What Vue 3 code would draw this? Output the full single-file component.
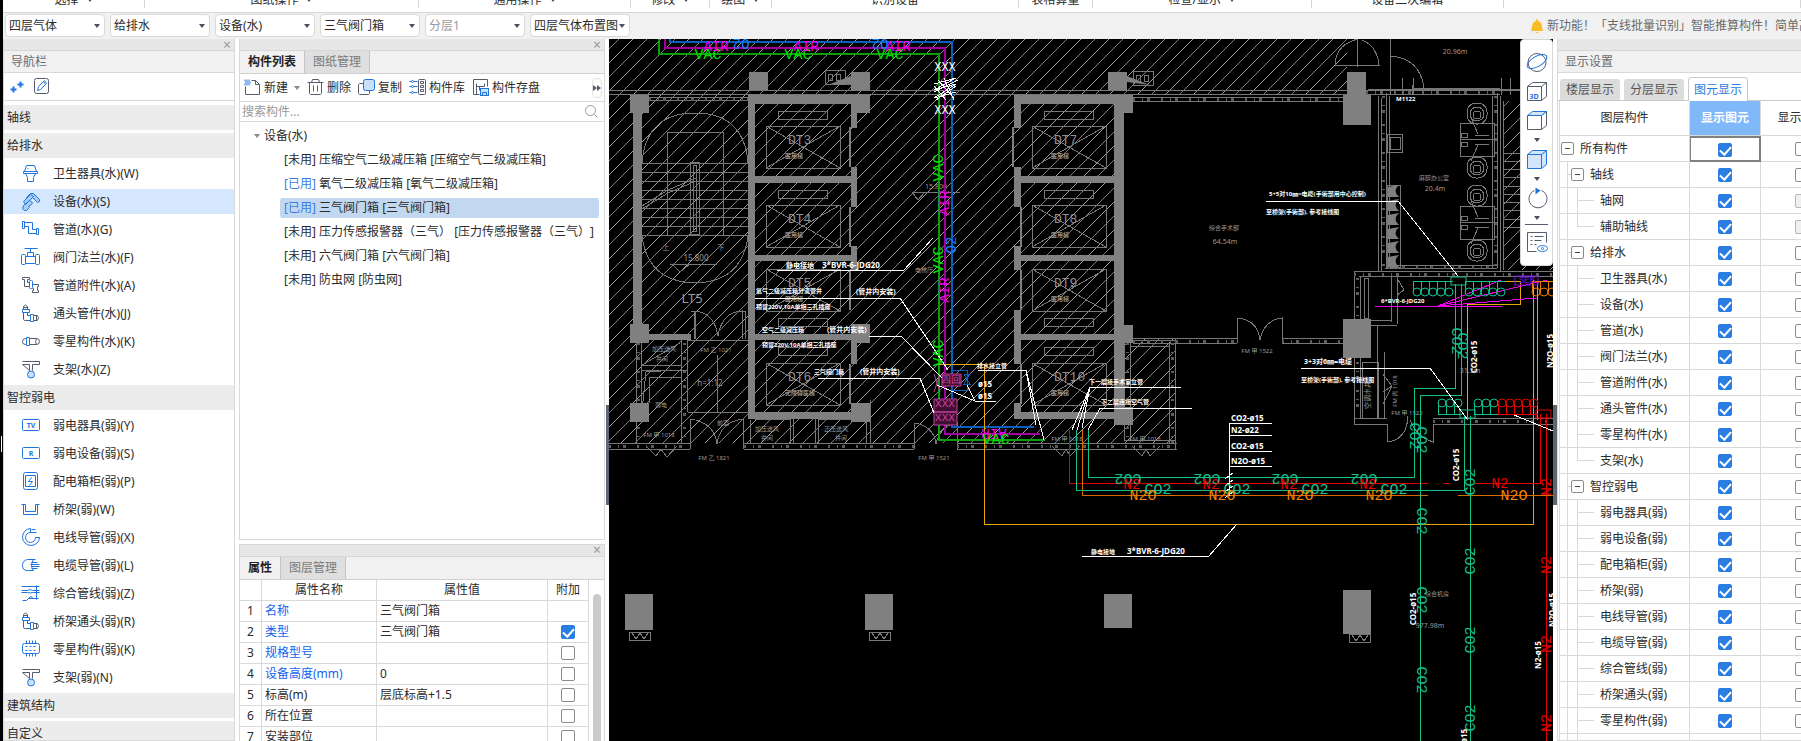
<script setup>
import { ref } from 'vue';

const ribbonGroups = [
    { name: '选择', w: 142, arrow: true },
    { name: '图纸操作', w: 274, arrow: true },
    { name: '通用操作', w: 213, arrow: true },
    { name: '修改', w: 78, arrow: true },
    { name: '绘图', w: 61, arrow: true },
    { name: '识别设备', w: 248 },
    { name: '表格算量', w: 73 },
    { name: '检查/显示', w: 219, arrow: true },
    { name: '设备二次编辑', w: 192 },
    { name: '', w: 298 }
];

const filters = [
    { label: '楼层', value: '四层气体' },
    { label: '专业', value: '给排水' },
    { label: '构件类型', value: '设备(水)' },
    { label: '构件', value: '三气阀门箱' },
    { label: '分层', value: '分层1', disabled: true },
    { label: '图纸', value: '四层气体布置图' }
];

const B = '#1f74e0';
const G = '#555c6e';
const icons = {
    toilet: `<g stroke="${B}"><path d="M5 1h8l2 6H3zM2 7h14v2H2zM4 9l2 4v4h6v-4l2-4"/><path d="M6 4h1"/></g>`,
    gun: `<g stroke="${B}" fill="#a9cdf7"><path d="M5 5l4-4h3l6 6v2l-2 1-5-5-3 3z"/><path d="M2 9l7-7 3 2-8 8zM2 13l6-5 3 2-1 2-3 2 1 1-3 3H3l-2-2z"/></g>`,
    pipe: `<g stroke="${B}"><path d="M1 1h2v7H1zM15 8h2v6h-2zM3 2h8v7h4M3 6h4v7h8"/></g>`,
    valve: `<g stroke="${B}"><path d="M3 0h13M9 0v4M6 4h6v4H6zM4 8h10v7H4z"/><rect x="0" y="6" width="4" height="10" rx="1" fill="#fff"/><rect x="14" y="6" width="4" height="10" rx="1" fill="#fff"/></g>`,
    fitting: `<g stroke="${G}"><path d="M1 1h7v2H6v3h2M1 1v2h2v7h5M11 8h6v2h-1v4h1v2h-6M11 12h1v2h-1v2"/><rect x="8" y="4" width="3" height="8" rx="1" stroke="${B}"/></g>`,
    elbow: `<g stroke="${G}"><path d="M2 5V2q2-3 4 0v3M2 8v7q0 1 2 1h5M6 8v3h3M12 11h4q2 2 0 5h-4M15 11v5M2 3h4"/><path stroke="${B}" d="M1 5h7v3H1zM9 10h3v7H9z"/></g>`,
    sleeve: `<g stroke="${G}"><rect x="1" y="6" width="17" height="6" rx="3"/><path d="M15 6q-2 3 0 6"/><path stroke="${B}" fill="#fff" d="M5 5h3v8H5z"/></g>`,
    hanger: `<g stroke="${G}"><path d="M1 1h17v3H11v6M8 10V4H1z"/><circle cx="9.500" cy="14" r="3.500" stroke="${B}" fill="#c9e0fb"/></g>`,
    tv: `<rect x="1" y="3" width="17" height="11" rx="1" stroke="${B}"/><text x="9.500" y="11" font-size="7" font-weight="700" text-anchor="middle" font-family="Noto Sans" fill="${B}">TV</text>`,
    r: `<rect x="1" y="3" width="17" height="11" rx="1" stroke="${B}"/><text x="9.500" y="11" font-size="7" font-weight="700" text-anchor="middle" font-family="Noto Sans" fill="${B}">R</text>`,
    cabinet: `<g stroke="${B}"><rect x="2" y="0" width="14" height="17" rx="2"/><path d="M4 3h10v11H4zM10 5L7 9h4L8 13"/></g>`,
    tray: `<g stroke="${B}"><path d="M0 4h4v7h10V4h4M2 4v10h14V4"/></g>`,
    conduit: `<g stroke="${B}"><path d="M9 0A8.500 8.500 0 1 0 18 9h-4a5 5 0 1 1-5-5h2M9 0v4M10 1h4M10 4h5M14 9h4"/></g>`,
    cable: `<g stroke="${B}"><path d="M14 3H6Q1 4 1 9t5 5h6M12 3q-4 6 0 11M10 6h6M9 8h9M10 10h8M10 12h6"/></g>`,
    wires: `<g stroke="${B}"><path d="M0 2h18M0 6h6q3-2 5 0h7M0 8h6q3 1 5 0h7M15 1v14M1 16h4l2-2h10M7 14q3-4 4 0"/></g>`,
    chip: `<g stroke="${B}"><rect x="1" y="3" width="17" height="10" rx="2"/><path d="M5 0v3M8 0v3M11 0v3M14 0v3M5 13v3M8 13v3M11 13v3M14 13v3"/><path stroke-dasharray="2 2" d="M4 6h11M4 10h11"/></g>`,
    plus: `<g stroke="${B}"><path stroke-width="2" d="M1 12h6M4 9v6M8 7h6M11 4v6"/></g>`,
    edit: `<rect x="2" y="1" width="14" height="15" rx="2" stroke="${G}"/><path d="M5 13l1-4 6-6 2 3-6 6zM11 4l2 3" stroke="${B}"/>`,
    create: `<path stroke="${G}" d="M2 8v8h14V6l-4-4H8M12 2v4h4"/><path stroke="${B}" stroke-dasharray="1 1" stroke-width="2" d="M1 2h5M2 4h5M1 6h5"/>`,
    trash: `<path stroke="${G}" d="M1 4h16M5 4l1-3h6l1 3M3 4v11l1 1h10l1-1V4"/><path stroke="#d0312d" d="M7 7v6M11 7v6"/>`,
    copy: `<path stroke="${G}" d="M6 5H2L1 6v9l1 1h9l1-1v-3"/><rect x="6" y="1" width="11" height="11" rx="2" fill="#c9e0fb" stroke="${B}"/>`,
    library: `<g stroke="${G}"><rect x="10" y="1" width="7" height="15" rx="1"/><path d="M12 3h3v2h-3zM12 7h3v2h-3zM12 11h3v2h-3z"/></g><path stroke="${B}" d="M1 3h2M5 3h4M1 8h2M5 8h4M1 14h2M5 14h4"/><g stroke="${B}"><circle cx="4" cy="3" r="1"/><circle cx="4" cy="8" r="1"/><circle cx="4" cy="14" r="1"/></g>`,
    save: `<path stroke="${G}" d="M8 16H2V1h14v7M5 16V5M5 8h8M13 5v3M8 8v4"/><rect x="9" y="10" width="8" height="7" fill="#c9e0fb" stroke="${B}"/><path stroke="${B}" d="M11 14h4v3h-4z"/>`,
    search: `<circle cx="8" cy="8" r="5" stroke="#999"/><path stroke="#999" d="M12 12l3 3"/>`
};

const navigation = [
    { title: '轴线', items: [] },
    {
        title: '给排水',
        items: [
            { icon: 'toilet', name: '卫生器具(水)(W)' },
            { icon: 'gun', name: '设备(水)(S)' },
            { icon: 'pipe', name: '管道(水)(G)' },
            { icon: 'valve', name: '阀门法兰(水)(F)' },
            { icon: 'fitting', name: '管道附件(水)(A)' },
            { icon: 'elbow', name: '通头管件(水)(J)' },
            { icon: 'sleeve', name: '零星构件(水)(K)' },
            { icon: 'hanger', name: '支架(水)(Z)' }
        ]
    },
    {
        title: '智控弱电',
        items: [
            { icon: 'tv', name: '弱电器具(弱)(Y)' },
            { icon: 'r', name: '弱电设备(弱)(S)' },
            { icon: 'cabinet', name: '配电箱柜(弱)(P)' },
            { icon: 'tray', name: '桥架(弱)(W)' },
            { icon: 'conduit', name: '电线导管(弱)(X)' },
            { icon: 'cable', name: '电缆导管(弱)(L)' },
            { icon: 'wires', name: '综合管线(弱)(Z)' },
            { icon: 'elbow', name: '桥架通头(弱)(R)' },
            { icon: 'chip', name: '零星构件(弱)(K)' },
            { icon: 'hanger', name: '支架(弱)(N)' }
        ]
    },
    { title: '建筑结构', items: [] },
    { title: '自定义', items: [] }
];
const activeNav = ref('设备(水)(S)');

const listTools = [
    { icon: 'create', name: '新建', arrow: true },
    { icon: 'trash', name: '删除' },
    { icon: 'copy', name: '复制' },
    { icon: 'library', name: '构件库' },
    { icon: 'save', name: '构件存盘' }
];

const components = [
    { used: false, name: '压缩空气二级减压箱 [压缩空气二级减压箱]' },
    { used: true, name: '氧气二级减压箱 [氧气二级减压箱]' },
    { used: true, name: '三气阀门箱 [三气阀门箱]' },
    { used: false, name: '压力传感报警器（三气） [压力传感报警器（三气）]' },
    { used: false, name: '六气阀门箱 [六气阀门箱]' },
    { used: false, name: '防虫网 [防虫网]' }
];
const activeComponent = ref(2);
const keyword = ref('');

const properties = ref([
    { name: '名称', value: '三气阀门箱', key: true, extra: null },
    { name: '类型', value: '三气阀门箱', key: true, extra: true },
    { name: '规格型号', value: '', key: true, extra: false },
    { name: '设备高度(mm)', value: '0', key: true, extra: false },
    { name: '标高(m)', value: '层底标高+1.5', extra: false },
    { name: '所在位置', value: '', extra: false },
    { name: '安装部位', value: '', extra: false }
]);

const layers = ref([
    ['所有构件', 0], ['轴线', 1], ['轴网', 2], ['辅助轴线', 2, 'last'],
    ['给排水', 1], ['卫生器具(水)', 2], ['设备(水)', 2], ['管道(水)', 2], ['阀门法兰(水)', 2],
    ['管道附件(水)', 2], ['通头管件(水)', 2], ['零星构件(水)', 2], ['支架(水)', 2, 'last'],
    ['智控弱电', 1], ['弱电器具(弱)', 2], ['弱电设备(弱)', 2], ['配电箱柜(弱)', 2], ['桥架(弱)', 2],
    ['电线导管(弱)', 2], ['电缆导管(弱)', 2], ['综合管线(弱)', 2], ['桥架通头(弱)', 2], ['零星构件(弱)', 2],
    ['支架(弱)', 2, 'last']
].map(([name, level, last]) => ({ name, level, last: !!last, shown: true, label: false, locked: name === '轴网' || name === '辅助轴线' })));

// ---- floor plan ----
const solids = [
    [749, 72, 19, 18], [851, 72, 19, 18], [1108, 72, 19, 18], [1347, 72, 19, 23],
    [630, 95, 19, 18], [633, 112, 9, 214], [630, 324, 19, 19], [630, 403, 19, 19], [648, 334, 43, 6],
    [748, 95, 7, 324], [748, 95, 122, 9], [851, 95, 19, 18], [851, 112, 6, 16], [851, 167, 6, 40], [851, 246, 6, 24],
    [755, 176, 102, 7], [755, 255, 102, 6], [755, 334, 102, 6], [755, 412, 102, 7],
    [851, 324, 19, 19], [851, 343, 6, 21], [851, 403, 19, 19], [849, 127, 2, 40], [849, 207, 2, 40], [849, 270, 2, 40], [849, 364, 2, 40],
    [1014, 95, 7, 33], [1014, 95, 119, 9], [1114, 95, 10, 324], [1114, 95, 19, 18], [1014, 167, 7, 40], [1014, 246, 7, 24], [1014, 310, 7, 54], [1014, 403, 7, 16],
    [1020, 176, 94, 7], [1020, 255, 94, 6], [1020, 334, 94, 6], [1014, 412, 110, 7], [1124, 325, 9, 18], [1114, 407, 19, 18],
    [1020, 207, 2, 40], [1020, 270, 2, 40], [1012, 127, 2, 40], [1020, 364, 2, 40],
    [1343, 95, 28, 30], [1343, 319, 28, 39],
    [625, 594, 28, 36], [865, 594, 28, 36], [1104, 594, 28, 34], [1343, 590, 28, 44]
];

const cabs = [];
[[766, ['DT3', 'DT4', 'DT5', 'DT6']], [1032, ['DT7', 'DT8', 'DT9', 'DT10']]].forEach(([x, names]) => {
    names.forEach((name, i) => {
        cabs.push({ x, name, y: [126, 205, 269, 363][i], slot: [111, 190, 318, 347][i], note: i === 3 && x === 766 ? '无障碍医梯' : '医用梯' });
    });
});

const steps = Array.from({ length: 9 }, (_, i) => 163 + i * 9);

// thin grey wall and door outlines
const outlines = [
    'M609 90H1347M609 94H1500M1366 90H1520M649 97H748M649 100H748M1133 97H1343M1133 101H1343',
    'M667 236V132H723V236M642 163Q646 113 695 113Q744 113 748 163M642 236Q648 282 695 283Q742 282 748 236',
    'M690 162h9v72h-9zM693 165h3v66h-3zM642 206L668 190L696 178M642 209L668 193L696 181',
    'M670 264H717M672 264L680 272L690 264M912 192H960M912 192L918 200L925 192',
    'M636 340V443M641 343V420M681 340V443M687 340V412M642 365H681M642 370H687M649 377H681V440M649 377V403M642 365L680 343M641 420L646 372L676 370',
    'M688 340H748M688 412H748M717 355V412',
    'M694 339V311Q714 312 718 336Q722 312 742 311V339M691 311h4v28M741 311h4v28',
    'M609 443H690M609 449H690M744 443H914M744 449H914M957 443H1177M957 449H1177',
    'M690 449V419Q714 422 717 444Q720 422 743 419V449M914 449V423Q934 426 936 444Q940 426 957 423V449',
    'M646 446L656 456L661 449L667 457L677 446M750 420V443M755 419H790V443M818 443V419H866V443M793 419V443M815 419V443M870 400V443',
    'M1124 343V440M1130 343V440M1169 343V443M1175 343V449M1130 340H1175M1130 346H1169M1124 440H1175M1052 446L1062 456L1066 449L1070 456L1080 446M1132 446L1142 456L1146 449L1150 456L1160 446',
    'M1133 338H1237M1133 343H1237M1282 338H1343M1282 343H1343M1237 343V318Q1258 320 1260 340Q1264 320 1282 318V343M1175 338V343',
    'M1378 96V271M1381 98V271M1386 93V268M1389 96V266M1368 89H1520M1412 94V85M1414 88H1500M1385 268H1497M1387 265H1495M1492 96V268M1497 93V268M1500 96V271M1503 101V270',
    'M1390 57V39M1335 65Q1336 47 1352 41L1357 39M1335 65H1379Q1377 46 1362 40M1357 39V67M1390 56Q1420 58 1424 88M1390 56V95M1402 78V95M1413 78V95M1501 78V95M1510 78V95',
    'M1354 271H1553M1359 276H1553M1354 271V424M1360 276V419M1364 278h4v40h-4zM1391 276V322M1397 276V324M1371 320H1391M1371 325H1397M1377 325V419M1384 352V419M1354 418H1387M1354 424H1387M1354 358V418M1362 362H1378V418M1362 362V418',
    'M1433 418H1553M1433 424H1553M1387 424V442Q1407 440 1408 416M1433 424V442Q1416 436 1410 420M1397 278L1404 290L1397 295M1383 374L1392 386L1383 392M1392 386L1383 404',
    'M1503 153H1553M1503 161H1553M1503 169H1553M1503 177H1553M1503 186H1553M1503 194H1553M1503 202H1553M1503 210H1553M1503 219H1553M1503 227H1553',
    'M1387 134h15v18h-15zM1390 137h10v12h-10zM1387 185h13v82h-13z',
    'M825 70h20v14h-20zM1133 71h20v14h-20zM828 74h4v6h-4zM836 74h4v6h-4zM1136 75h4v6h-4zM1144 75h4v6h-4z',
    'M629 632h21v8h-21zM632 633l4 6 4-6 4 6 4-6M869 632h21v8h-21zM872 633l4 6 4-6 4 6 4-6M1349 634h21v8h-21zM1352 635l4 6 4-6 4 6 4-6'
];
const speckles = ['M609 446H690', 'M744 446H914', 'M957 446H1177', 'M1133 99H1343', 'M649 99H748', 'M1133 341H1237', 'M1282 341H1343', 'M1433 421H1553', 'M1383 96V268', 'M1495 96V268', 'M1357 278V419', 'M1127 343V440', 'M1172 343V443', 'M1354 274H1553', 'M638 343V440', 'M684 343V440', 'M1388 267H1495', 'M1366 92H1500'];
const lockers = Array.from({ length: 6 }, (_, i) => 185 + i * 14);
const desks = [[123, 114, 168], [206, 196, 251]];

const pipes = [
    { c: '#0a9f0a', d: 'M659 39V54H939V440H1045', w: 2 },
    { c: '#a000a0', d: 'M665 39V48H945V434H1040', w: 2 },
    { c: '#0b5ec0', d: 'M670 39V42H952V427H1034', w: 2 },
    { c: '#0b5ec0', d: 'M952 370H967V390H952M964 374H970L964 384H970ZM964 374', w: 1 },
    { c: '#e8a80c', d: 'M937 364H984V524H1533V280M1467 420V304H1520V281H1466M1537 281V420', w: 1 },
    { c: '#e00000', d: 'M1069 430V483H1428M1443 483H1449M1475 483H1540V414M1546 414V741', w: 1 },
    { c: '#d86a00', d: 'M1082 430V495H1428M1458 495H1553', w: 1 },
    { c: '#12c08c', d: 'M1076 430V490H1464V416M1088 430V477H1414V388H1455V284M1420 741V395H1461V284M1470 416V741', w: 1 },
    { c: '#e800e8', d: 'M1375 306H1502M1438 306L1501 280M1438 306L1547 280M1438 306L1537 298', w: 1 }
];

const coils = [];
function addCoil(from, count, y, top, c){
    for(let i = 0; i < count; i++) coils.push({ x: from + i * 8, y, top, c });
}
addCoil(1417, 5, 292, 281, '#12c08c');
addCoil(1469, 5, 292, 281, '#12c08c');
addCoil(1536, 3, 292, 281, '#e87800');
addCoil(1442, 3, 403, 414, '#12c08c');
addCoil(1478, 3, 403, 414, '#12c08c');
addCoil(1502, 5, 403, 414, '#e80000');

const leaders = [
    'M777 270H904L933 238', 'M755 298H900L948 370', 'M869 336H901L942 378', 'M818 378H920L934 413',
    'M978 370H1026L1036 425M1026 370L1044 440', 'M996 401H975L967 385M975 401L937 385',
    'M1181 387H1090L1072 430M1090 387L1077 430M1090 387L1082 428', 'M1192 408H1100L1088 430',
    'M1229 423H1272M1229 435H1272M1229 451H1272M1229 466H1272M1229 423V496M1225 479l8-6M1225 486l8-6M1225 492l8-6M1225 498l8-6',
    'M1082 556H1209L1237 524', 'M1266 201H1398L1458 276', 'M1301 368H1430L1467 419', 'M1514 415L1553 431',
    'M934 84l22-6-22 12 22-6-22 14 22-6M934 92l24-12M936 100l20-14M938 80l16 18M944 78l10 22M934 86l12 14'
];

const labels = [];
function label(t, x, y, c, size = 10, r = 0){
    labels.push({ t, x, y, c, size, r });
}
[708, 798, 890].forEach(x => { label('VAC', x, 55, '#00e000', 15); label('AIR', x + 8, 47, '#f000f0', 14); });
label('O2', 741, 43, '#1480ff', 14, 180);
label('O2', 880, 43, '#1480ff', 14, 180);
label('VAC', 939, 168, '#00e000', 15, -90);
label('AIR', 945, 203, '#f000f0', 14, -90);
label('O2', 952, 245, '#1480ff', 14, -90);
label('VAC', 939, 260, '#00e000', 15, -90);
label('AIR', 945, 290, '#f000f0', 14, -90);
label('VAC', 939, 353, '#00e000', 15, -90);
label('AIR', 994, 433, '#f000f0', 14, 180);
label('VAC', 996, 440, '#00e000', 15);
label('XXX', 945, 68, '#fff', 12);
label('XXX', 945, 111, '#fff', 12);
label('XXX', 945, 404, '#d040a0', 11);
label('XXX', 945, 418, '#d040a0', 11);
label('四回', 951, 380, '#d040a0', 10);
[0, 79, 157, 236].forEach(d => {
    label('CO2', 1128 + d, 477, '#12c08c', 15, 180);
    label('N2', 1132 + d, 485, '#e80000', 14);
    label('CO2', 1158 + d, 490, '#12c08c', 15);
    label('N2O', 1143 + d, 496, '#f58200', 15);
});
label('N2', 1500, 484, '#e80000', 14);
label('N2O', 1514, 496, '#f58200', 15);
[440, 521, 600, 680].forEach(y => label('CO2', 1420, y, '#12c08c', 15, 90));
label('CO2', 1413, 436, '#12c08c', 15, 90);
label('CO2', 1455, 341, '#12c08c', 15, 90);
label('CO2', 1461, 346, '#12c08c', 15, 90);
[482, 561, 640, 718].forEach(y => label('CO2', 1471, y, '#12c08c', 15, -90));
[487, 565, 644, 723].forEach(y => label('N2', 1547, y, '#e80000', 15, -90));

const notes = [
    ['静电接地', 786, 268, 7], ['3*BVR-6-JDG20', 822, 268, 8], ['氧气二级减压箱分流管井', 756, 293, 6], ['(管井内安装)', 856, 294, 7],
    ['预留220V,10A单相三孔插座', 756, 309, 6], ['空气二级减压箱', 762, 332, 6], ['(管井内安装)', 827, 332, 7],
    ['预留220V,10A单相三孔插座', 762, 347, 6], ['三气阀门箱', 814, 374, 6], ['(管井内安装)', 860, 374, 7],
    ['排水接立管', 977, 368, 6], ['ø15', 978, 387, 8], ['ø15', 978, 399, 8],
    ['下一层接手术室立管', 1089, 384, 6], ['下二层连接空气管', 1101, 404, 6],
    ['CO2-ø15', 1231, 421, 8], ['N2-ø22', 1231, 433, 8], ['CO2-ø15', 1231, 449, 8], ['N2O-ø15', 1231, 464, 8],
    ['静电接地', 1091, 554, 6], ['3*BVR-6-JDG20', 1127, 554, 8], ['6*BVR-6-JDG20', 1381, 303, 6],
    ['5+5对10㎜=电缆(手術部用中心控制)', 1269, 196, 6], ['至桥架(手術部), 参考接线图', 1266, 214, 6],
    ['3+3对6㎜=电缆', 1304, 364, 7], ['至桥架(手術部), 参考接线图', 1301, 382, 6], ['M1122', 1396, 101, 6]
];
const risers = [
    ['CO2-ø15', 1455, 465], ['CO2-ø15', 1412, 609], ['CO2-ø15', 1473, 357], ['N2O-ø15', 1549, 351],
    ['N2O-ø15', 1551, 610], ['N2-ø15', 1537, 655], ['ø15', 1463, 736]
];
const roomNotes = [
    ['15.800', 696, 261, 8], ['15.800', 936, 189, 7], ['LT5', 692, 303, 13], ['上', 666, 250, 7], ['下', 721, 250, 7],
    ['加压送风', 664, 351, 6], ['井间', 662, 361, 6], ['弱电', 661, 407, 6], ['FM 甲 1018', 659, 437, 6], ['FM 乙 1021', 716, 352, 6], ['h=1:12', 710, 386, 8],
    ['前室', 723, 425, 6], ['FM 乙 1821', 714, 460, 6], ['FM 甲 1521', 934, 460, 6], ['加压送风', 767, 431, 6], ['井间', 767, 440, 6],
    ['正压送风', 836, 431, 6], ['井间', 841, 440, 6], ['电梯厅', 924, 272, 6], ['综合手术部', 1224, 230, 6], ['64.54m', 1225, 244, 7], ['FM 甲 1522', 1257, 353, 6],
    ['20.96m', 1455, 54, 7], ['麻醉办公室', 1434, 180, 6], ['20.4m', 1435, 191, 7], ['31.5m', 1470, 373, 7], ['FM 甲 1522', 1407, 415, 6],
    ['FM 甲 1018', 1067, 441, 6], ['FM 甲 1018', 1145, 441, 6], ['综合机房', 1437, 596, 6], ['977.98m', 1430, 628, 7]
];
const uprightNotes = [['空调水井', 1370, 395, 7], ['FM 丙 1018', 1397, 391, 6]];
</script>

<template>
  <div class="app">
    <div class="edge"><i></i></div>
    <div class="shell">
      <div class="ribbon">
        <div v-for="g in ribbonGroups" :key="g.name" class="ribbon-group" :style="{ flexGrow: g.w }">
          <span>{{ g.name }}</span><b v-if="g.arrow" class="caret"></b>
        </div>
      </div>

      <div class="filter-bar">
        <label v-for="f in filters" :key="f.label" class="picker">
          <select :aria-label="f.label" :disabled="f.disabled">
            <option>{{ f.value }}</option>
          </select>
          <b class="caret"></b>
        </label>
        <a href="#" class="news" @click.prevent>
          <svg width="14" height="16" viewBox="0 0 14 16">
            <path d="M7 1q1 0 1 2 4 1 4 6l1 4H1l1-4q0-5 4-6 0-2 1-2zM5 14h4q-2 2-4 0z" fill="#f8bd26" />
          </svg>
          <span>新功能！「支线批量识别」智能推算构件！简单高效</span>
        </a>
      </div>

      <div class="workspace">
        <aside class="panel nav">
          <div class="grip"><button aria-label="关闭导航栏">×</button></div>
          <div class="title">导航栏</div>
          <div class="nav-tools">
            <button aria-label="添加"><svg class="ico" viewBox="-0.5 -0.5 19 19" v-html="icons.plus"></svg></button>
            <button aria-label="编辑"><svg class="ico" viewBox="-0.5 -0.5 19 19" v-html="icons.edit"></svg></button>
          </div>
          <div class="nav-list">
            <template v-for="s in navigation" :key="s.title">
              <button class="section">{{ s.title }}</button>
              <button v-for="n in s.items" :key="n.name" class="entry" :class="{ active: n.name === activeNav }" @click="activeNav = n.name">
                <svg class="ico" viewBox="-0.5 -0.5 19 19" v-html="icons[n.icon]"></svg>
                <span>{{ n.name }}</span>
              </button>
            </template>
          </div>
        </aside>

        <div class="middle">
          <section class="panel list">
            <div class="grip"><button aria-label="关闭构件列表">×</button></div>
            <div class="tabs">
              <button class="on">构件列表</button>
              <button>图纸管理</button>
            </div>
            <div class="list-tools">
              <button v-for="t in listTools" :key="t.name">
                <svg class="ico" viewBox="-0.5 -0.5 19 19" v-html="icons[t.icon]"></svg>
                <span>{{ t.name }}</span>
                <b v-if="t.arrow" class="caret light"></b>
              </button>
              <button class="more" aria-label="更多">
                <svg width="8" height="6" viewBox="0 0 8 6"><path d="M0 0l4 3-4 3zM4 0l4 3-4 3z" fill="#555c6e" /></svg>
              </button>
            </div>
            <div class="search">
              <input v-model="keyword" type="text" placeholder="搜索构件..." aria-label="搜索构件" />
              <svg class="ico" viewBox="-0.5 -0.5 19 19" v-html="icons.search"></svg>
            </div>
            <div class="tree">
              <div class="root"><b class="caret light"></b><span>设备(水)</span></div>
              <button v-for="(c, i) in components" :key="c.name" class="leaf" :class="{ active: i === activeComponent }" @click="activeComponent = i">
                <span :class="{ used: c.used }">{{ c.used ? '[已用]' : '[未用]' }}</span> {{ c.name }}
              </button>
            </div>
          </section>

          <section class="panel props">
            <div class="grip"><button aria-label="关闭属性">×</button></div>
            <div class="tabs">
              <button class="on">属性</button>
              <button>图层管理</button>
            </div>
            <div class="props-body">
              <table>
                <thead>
                  <tr><th class="c-no"></th><th class="c-name">属性名称</th><th>属性值</th><th class="c-extra">附加</th></tr>
                </thead>
                <tbody>
                  <tr v-for="(p, i) in properties" :key="p.name">
                    <td class="mid">{{ i + 1 }}</td>
                    <td :class="{ key: p.key }">{{ p.name }}</td>
                    <td>{{ p.value }}</td>
                    <td class="mid"><input v-if="p.extra !== null" v-model="p.extra" type="checkbox" :aria-label="p.name" /></td>
                  </tr>
                </tbody>
              </table>
              <div class="scroll"><i></i></div>
            </div>
          </section>
        </div>

        <div class="splitter"><i></i></div>

        <main class="canvas">
          <svg class="plan" viewBox="609 39 944 702" preserveAspectRatio="xMinYMin slice">
            <defs>
              <pattern id="hatch" width="28" height="28" patternUnits="userSpaceOnUse">
                <path d="M-1 29L29 -1M-1 1L1 -1M27 29L29 27" stroke="#a0a0a0" />
                <path d="M-1 15L15 -1M13 29L29 13" stroke="#808080" />
              </pattern>
            </defs>
            <rect x="609" y="39" width="944" height="702" fill="#000" />
            <path fill="url(#hatch)" d="M609 39H1347V90H1340V95H1124V334H1175V443H609Z" />
            <path fill="#000" d="M1124 104H1343V338H1124Z" />
            <path fill="url(#hatch)" d="M1503 101H1553V270H1503Z" />
            <g class="thin">
              <path v-for="d in outlines" :key="d" :d="d" />
              <path v-for="y in steps" :key="y" :d="`M642 ${y}H748`" />
              <path v-for="d in speckles" :key="d" :d="d" class="speckle" />
            </g>
            <g v-for="c in cabs" :key="c.name" class="thin">
              <rect :x="c.x + 12" :y="c.slot" width="49" height="8" />
              <rect :x="c.x" :y="c.y" width="74" height="42" />
              <path :d="`M${c.x} ${c.y}l74 42M${c.x} ${c.y + 42}l74-42`" />
              <text :x="c.x + 22" :y="c.y + 18" class="cab">{{ c.name }}</text>
              <text :x="c.x + 19" :y="c.y + 32" class="cab-note">{{ c.note }}</text>
            </g>
            <rect v-for="(s, i) in solids" :key="i" :x="s[0]" :y="s[1]" :width="s[2]" :height="s[3]" fill="#808080" />
            <path d="M851 76L830 84L851 85ZM1127 76L1150 85L1127 82Z" fill="#808080" />
            <path v-for="y in lockers" :key="y" :d="`M1388 ${y + 12}V${y + 2}L1399 ${y}Q1392 ${y + 6} 1399 ${y + 12}Z`" fill="#808080" />
            <g v-for="d in desks" :key="d[0]" class="thin">
              <path :d="`M1460 ${d[0]}h34v33h-34zM1460 ${d[0] + 16}h34M1475 ${d[0] + 12}h14M1475 ${d[0] + 21}h14M1461 ${d[0] + 10}h6v4h-6zM1461 ${d[0] + 19}h6v4h-6zM1471 ${d[0] - 5}l7 16M1471 ${d[0] + 38}l7-16`" />
              <template v-for="y in [d[1], d[2]]" :key="y">
                <rect x="1467" :y="y - 11" width="20" height="21" rx="9" />
                <circle cx="1477" :cy="y" r="7" />
                <circle cx="1477" :cy="y + 1" r="4" />
              </template>
            </g>
            <g class="room">
              <text v-for="(n, i) in roomNotes" :key="i" :x="n[1]" :y="n[2]" :font-size="n[3]">{{ n[0] }}</text>
              <text v-for="n in uprightNotes" :key="n[0]" :x="n[1]" :y="n[2]" :font-size="n[3]" :transform="`rotate(-90 ${n[1]} ${n[2]})`">{{ n[0] }}</text>
            </g>

            <path v-for="p in pipes" :key="p.d" :d="p.d" :stroke="p.c" :stroke-width="p.w" class="crisp" />
            <path d="M942 374H961V386H942ZM934 399H957V412H934ZM934 412H957V425H934ZM934 374L940 392M940 374L934 392" stroke="#c040a0" fill="#401030" />
            <rect x="1451" y="277" width="15" height="8" stroke="#12c08c" />
            <rect x="1460" y="410" width="15" height="8" stroke="#12c08c" />
            <rect x="1536" y="410" width="15" height="8" stroke="#e00000" />
            <rect x="1515" y="276" width="23" height="9" stroke="#7a10e8" />
            <g v-for="(c, i) in coils" :key="i" fill="none" :stroke="c.c">
              <path :d="`M${c.x - 4} ${c.top}h8M${c.x - 4} ${c.y}V${c.top}`" class="crisp" />
              <circle :cx="c.x" :cy="c.y" r="4" />
            </g>
            <path v-for="d in leaders" :key="d" :d="d" stroke="#fff" class="crisp" />
            <g class="marks">
              <text v-for="(l, i) in labels" :key="i" :x="l.x" :y="l.y" :fill="l.c" :font-size="l.size" :transform="`rotate(${l.r} ${l.x} ${l.y})`">{{ l.t }}</text>
              <text x="1527" y="281" fill="#7a10e8" font-size="9">SEB</text>
            </g>
            <g class="notes">
              <text v-for="(n, i) in notes" :key="i" :x="n[1]" :y="n[2]" :font-size="n[3]">{{ n[0] }}</text>
            </g>
            <g class="notes risers">
              <text v-for="(n, i) in risers" :key="i" :x="n[1]" :y="n[2]" font-size="8" :transform="`rotate(-90 ${n[1]} ${n[2]})`">{{ n[0] }}</text>
            </g>
          </svg>

          <div class="view-tools">
            <button aria-label="动态观察">
              <svg width="22" height="22" viewBox="-0.5 -0.5 22 22"><circle cx="10.500" cy="11" r="9" stroke="#555c6e" /><ellipse cx="10.500" cy="10" rx="11" ry="5" transform="rotate(-30 10.500 10)" stroke="#1f74e0" /></svg>
            </button>
            <button aria-label="三维">
              <svg width="22" height="22" viewBox="-0.5 -0.5 22 22"><path d="M1 6h14v14H1zM1 6l5-4h14v14l-5 4M15 6l5-4" stroke="#555c6e" /><text x="3" y="18" font-size="7" font-weight="700" fill="#1f74e0">3D</text></svg>
            </button>
            <button aria-label="俯视">
              <svg width="22" height="22" viewBox="-0.5 -0.5 22 22"><path d="M1 6h14v14H1zM15 6l5-4v14l-5 4" stroke="#555c6e" /><path d="M1 6l5-4h14l-5 4z" fill="#d3e5fb" stroke="#1f74e0" /></svg>
            </button>
            <b class="caret"></b>
            <button aria-label="实体">
              <svg width="22" height="22" viewBox="-0.5 -0.5 22 22"><path d="M1 6l5-4h14v14l-5 4H1zM1 6h14v14M15 6l5-4" fill="#d3e5fb" stroke="#1f74e0" /></svg>
            </button>
            <b class="caret"></b>
            <button aria-label="旋转">
              <svg width="22" height="22" viewBox="-0.5 -0.5 22 22"><path d="M15 3A9 9 0 1 1 8 3" stroke="#555c6e" /><path d="M9 0l5 3-5 4z" fill="#1f74e0" /></svg>
            </button>
            <b class="caret"></b>
            <hr />
            <button aria-label="显示设置">
              <svg width="22" height="22" viewBox="-0.5 -0.5 22 22"><path d="M10 20H1V1h19v10M4 5h2M8 5h9M4 9h2M8 9h7M4 13h2M8 13h2" stroke="#555c6e" /><ellipse cx="16" cy="17" rx="5" ry="3" stroke="#1f74e0" /><circle cx="16" cy="17" r="1" stroke="#1f74e0" /></svg>
            </button>
          </div>
        </main>

        <div class="splitter right"><i></i></div>

        <aside class="panel layers">
          <div class="grip"></div>
          <div class="title">显示设置</div>
          <div class="layer-tabs">
            <button>楼层显示</button>
            <button>分层显示</button>
            <button class="on">图元显示</button>
          </div>
          <div class="layer-body">
            <table>
              <thead>
                <tr><th class="l-name">图层构件</th><th class="l-show">显示图元</th><th class="l-label">显示名称</th></tr>
              </thead>
              <tbody>
                <tr v-for="(l, i) in layers" :key="l.name">
                  <td>
                    <div class="node" :class="['lv' + l.level, { last: l.last }]">
                      <i v-if="l.level > 0" class="rail"></i>
                      <i v-if="l.level > 1" class="branch"></i>
                      <button v-else class="fold" :aria-label="'折叠' + l.name"></button>
                      <span>{{ l.name }}</span>
                    </div>
                  </td>
                  <td class="mid" :class="{ focus: i === 0 }"><input v-model="l.shown" type="checkbox" :aria-label="'显示' + l.name" /></td>
                  <td class="mid"><input v-model="l.label" type="checkbox" :disabled="l.locked" :aria-label="'名称' + l.name" /></td>
                </tr>
              </tbody>
            </table>
          </div>
        </aside>
      </div>
    </div>
  </div>
</template>

<style>
body{
    margin: 0;
    overflow: hidden;
}
</style>

<style scoped>
.app{
    display: flex;
    height: 100vh;
    overflow: hidden;
    background: #fff;
    color: #2b2b2b;
    font-family: "Noto Sans", "Noto Sans CJK SC", sans-serif;
    font-size: 12px;
    line-height: 16px;
    text-spacing-trim: space-all;
}
.app *{
    box-sizing: border-box;
}
button, select, input{
    font: inherit;
    color: inherit;
    margin: 0;
}
button{
    padding: 0;
    border: 0;
    background: none;
    white-space: nowrap;
    cursor: pointer;
    text-spacing-trim: space-all;
}
.edge{
    flex: none;
    width: 3px;
    background: #000;
    display: flex;
    align-items: center;
}
.edge i{
    width: 1px;
    height: 16px;
    margin: 146px 0 0 1px;
    background: #fff;
}
.shell{
    flex: 1;
    min-width: 0;
    display: flex;
    flex-direction: column;
}
.caret{
    flex: none;
    width: 0;
    border: 3px solid transparent;
    border-top: 4px solid #4a5060;
    border-bottom: 0;
}
.caret.light{
    border-top-color: #888;
}

/* ribbon */
.ribbon{
    flex: none;
    height: 13px;
    display: flex;
    align-items: flex-end;
    overflow: hidden;
    border-bottom: 1px solid #d6d6d6;
}
.ribbon-group{
    flex: 1 1 0;
    min-width: 0;
    display: flex;
    justify-content: center;
    align-items: center;
    gap: 8px;
    height: 16px;
    margin-bottom: 4px;
    border-right: 1px solid #d6d6d6;
    white-space: nowrap;
}
.filter-bar{
    flex: none;
    height: 26px;
    padding: 1px 0 2px 2px;
    display: flex;
    gap: 5px;
    background: #f1f1f1;
    overflow: hidden;
}
.picker{
    position: relative;
    flex: none;
    width: 100px;
}
.picker select{
    width: 100%;
    height: 23px;
    padding: 0 0 0 3px;
    appearance: none;
    border: 1px solid #d9d9d9;
    border-radius: 4px;
    background: #fff;
    opacity: 1;
}
.picker select:disabled{
    color: #999;
}
.picker .caret{
    position: absolute;
    right: 5px;
    top: 10px;
}
.news{
    flex: 1 0 270px;
    display: flex;
    justify-content: flex-end;
    align-items: center;
    gap: 3px;
    color: #6b6b6b;
    text-decoration: none;
    white-space: nowrap;
    margin-right: -22px;
}

/* panels */
.workspace{
    flex: 1;
    min-height: 0;
    display: flex;
    background: #fff;
}
.panel{
    display: flex;
    flex-direction: column;
    border: 1px solid #d9d9d9;
    border-top: 0;
    overflow: hidden;
}
.grip{
    flex: none;
    height: 12px;
    display: flex;
    justify-content: flex-end;
    align-items: center;
    padding-right: 3px;
    background: #e7e7e7;
    border-bottom: 1px solid #d6d6d6;
}
.grip button{
    color: #999;
    font-size: 14px;
    line-height: 10px;
}
.title{
    flex: none;
    height: 22px;
    padding-left: 7px;
    line-height: 21px;
    background: #f1f1f1;
    border-bottom: 1px solid #d9d9d9;
    color: #6b6b6b;
}
.ico{
    flex: none;
    width: 19px;
    height: 19px;
    fill: none;
}
.nav{
    flex: none;
    width: 232px;
}
.nav-tools{
    flex: none;
    display: flex;
    align-items: center;
    gap: 4px;
    height: 28px;
    padding-left: 5px;
    border-bottom: 1px solid #d9d9d9;
}
.nav-tools button, .nav-tools svg{
    height: 19px;
    display: block;
}
.nav-list{
    display: flex;
    flex-direction: column;
    gap: 3px;
    padding-top: 4px;
}
.section, .entry{
    flex: none;
    height: 25px;
    text-align: left;
}
.section{
    padding-left: 3px;
    background: #ececec;
}
.entry{
    display: flex;
    align-items: center;
    gap: 13px;
    padding-left: 17px;
}
.entry.active{
    background: #d4e7fe;
}
.middle{
    flex: none;
    width: 366px;
    margin-left: 4px;
    display: flex;
    flex-direction: column;
    gap: 4px;
}
.list{
    flex: 501 1 0;
    min-height: 0;
}
.props{
    flex: 197 1 0;
    min-height: 0;
    border-top: 1px solid #d9d9d9;
    border-bottom: 0;
}
.tabs{
    flex: none;
    display: flex;
    height: 23px;
    background: #f1f1f1;
    border-bottom: 1px solid #d0d0d0;
}
.tabs button{
    padding: 0 8px;
    background: #dfdfdf;
    color: #7a7a7a;
    border-right: 1px solid #c4c4c8;
}
.tabs .on{
    background: #f1f1f1;
    color: #222;
    font-weight: 700;
}
.list-tools{
    flex: none;
    display: flex;
    align-items: center;
    gap: 6px;
    height: 28px;
    padding: 0 2px 0 3px;
    border-bottom: 1px solid #d9d9d9;
}
.list-tools button{
    display: flex;
    align-items: center;
    gap: 2px;
}
.list-tools .caret{
    margin-left: 4px;
}
.list-tools .more{
    width: 10px;
    height: 20px;
    justify-content: center;
    margin-left: auto;
    border: 1px solid #e2e2e2;
    border-radius: 4px;
}
.more svg{
    flex: none;
}
.search{
    flex: none;
    display: flex;
    align-items: center;
    height: 20px;
    padding: 0 3px 0 2px;
    border-bottom: 1px solid #d9d9d9;
}
.search input{
    flex: 1;
    min-width: 0;
    padding: 0;
    border: 0;
    outline: 0;
}
.search input::placeholder{
    color: #999;
}
.tree{
    padding: 2px 5px 0 40px;
    display: flex;
    flex-direction: column;
}
.root{
    display: flex;
    align-items: center;
    gap: 4px;
    height: 24px;
    margin-left: -26px;
}
.leaf{
    height: 20px;
    margin: 2px 0;
    padding-left: 4px;
    text-align: left;
    border-radius: 3px;
}
.leaf.active{
    background: #c1d8f0;
}
.leaf .used{
    color: #3a7de0;
}

/* tables */
table{
    border-collapse: separate;
    border-spacing: 0;
    table-layout: fixed;
}
th{
    font-weight: 400;
}
th, td{
    padding: 0;
    border-right: 1px solid #d9d9d9;
    border-bottom: 1px solid #d9d9d9;
    white-space: nowrap;
}
.mid{
    text-align: center;
}
.props-body{
    flex: 1;
    min-height: 0;
    display: flex;
    overflow: hidden;
}
.props table{
    width: 349px;
    flex: none;
}
.props tr{
    height: 21px;
}
.props td{
    padding-left: 3px;
    height: 21px;
}
.props td.mid{
    padding: 0;
}
.props .c-no{
    width: 22px;
}
.props .c-name{
    width: 115px;
}
.props .c-extra{
    width: 41px;
}
.props .key{
    color: #1262f0;
}
.scroll{
    flex: 1;
    display: flex;
    padding: 14px 3px 0 4px;
}
.scroll i{
    flex: 1;
    border-radius: 4px 4px 0 0;
    background: #cacaca;
}
input[type=checkbox]{
    appearance: none;
    width: 14px;
    height: 14px;
    display: inline-block;
    vertical-align: middle;
    border: 1px solid #8a8a8a;
    border-radius: 2px;
    background: #fff;
}
input[type=checkbox]:disabled{
    background: #f0f0f0;
    border-color: #b5b5b5;
}
input[type=checkbox]:checked{
    border-color: #2a7de1;
    background: #2a7de1;
}
input[type=checkbox]:checked::after{
    content: "";
    display: block;
    width: 5px;
    height: 9px;
    margin: 0 auto;
    border: solid #fff;
    border-width: 0 2px 2px 0;
    transform: rotate(42deg);
}

/* canvas */
.splitter{
    flex: none;
    width: 4px;
    display: flex;
    align-items: center;
    padding-left: 1px;
    background: #fff;
}
.splitter i{
    flex: 1;
    height: 100px;
    margin-top: 130px;
    background: #5f6673;
}
.splitter.right{
    padding: 0;
}
.canvas{
    position: relative;
    flex: 1;
    min-width: 0;
    overflow: hidden;
    background: #000;
}
.plan{
    display: block;
    width: 100%;
    height: 100%;
    fill: none;
}
.crisp, .thin{
    shape-rendering: crispEdges;
}
.thin{
    stroke: #777;
}
.thin text{
    stroke: none;
    fill: #909090;
}
.thin .speckle{
    stroke: #5c5c5c;
    stroke-width: 3px;
    stroke-dasharray: 2 7 1 4 3 11;
}
.cab{
    font-family: "Liberation Mono", monospace;
    font-size: 13px;
}
.cab-note{
    font-size: 6px;
    font-weight: 700;
}
.room{
    fill: #9a9a9a;
    text-anchor: middle;
}
.marks{
    font-family: "Liberation Mono", monospace;
    text-anchor: middle;
    dominant-baseline: central;
}
.notes{
    fill: #fff;
    font-weight: 700;
}
.risers{
    text-anchor: middle;
    dominant-baseline: central;
}
.view-tools{
    position: absolute;
    top: 0;
    right: 0;
    width: 33px;
    height: 227px;
    padding-top: 11px;
    display: flex;
    flex-direction: column;
    align-items: center;
    gap: 7px;
    background: #fff;
    border: 1px solid #d6d6d6;
    border-radius: 4px;
}
.view-tools button, .view-tools svg{
    display: block;
    height: 22px;
    fill: none;
}
.view-tools hr{
    width: 23px;
    margin: -2px 0 -1px;
    border: 0;
    border-top: 1px solid #555c6e;
}
.view-tools .caret{
    margin-bottom: -1px;
}

/* layer panel */
.layers{
    flex: none;
    width: 244px;
    border-right: 0;
}
.layer-tabs{
    flex: none;
    display: flex;
    align-items: flex-end;
    gap: 4px;
    height: 28px;
    padding-left: 2px;
    border-bottom: 1px solid #c9c9c9;
}
.layer-tabs button{
    height: 21px;
    padding: 0 6px;
    background: #dcdcdc;
    color: #555;
    border-radius: 3px 3px 0 0;
}
.layer-tabs .on{
    height: 24px;
    padding: 0 5px;
    margin-bottom: -1px;
    border: 1px solid #c9c9c9;
    border-bottom: 0;
    border-radius: 4px 4px 0 0;
    background: #fff;
    color: #2a7de1;
}
.layer-body{
    flex: 1;
    min-height: 0;
    margin-left: 1px;
    border-left: 1px solid #d9d9d9;
    overflow: hidden;
}
.layers table{
    width: 283px;
}
.layers th{
    height: 35px;
}
.layers td{
    height: 26px;
}
.l-name{
    width: 130px;
}
.layers .l-show{
    width: 71px;
    background: #80b9fa;
    color: #fff;
    font-weight: 700;
}
.layers .focus{
    border: 2px solid #808080;
    border-left-width: 1px;
}
.node{
    display: flex;
    align-items: center;
    height: 25px;
    padding-left: 1px;
}
.node span{
    margin-left: 6px;
}
.fold{
    width: 13px;
    height: 13px;
    display: flex;
    align-items: center;
    justify-content: center;
    border: 1px solid #8a8a8a;
    border-radius: 2px;
    background: #fff;
}
.fold::after{
    content: "";
    width: 5px;
    height: 1px;
    background: #444;
}
.rail{
    width: 4px;
    height: 26px;
    margin-left: 6px;
    border-left: 1px solid #d9d9d9;
    background: linear-gradient(#d9d9d9, #d9d9d9) 0 50% / 100% 1px no-repeat;
}
.lv2 .rail{
    width: 10px;
    background: none;
}
.branch{
    width: 17px;
    height: 26px;
    border-left: 1px solid #d9d9d9;
    background: linear-gradient(#d9d9d9, #d9d9d9) 0 50% / 100% 1px no-repeat;
}
.last .branch{
    align-self: flex-start;
    height: 13px;
    background-position: 0 100%;
}
</style>
